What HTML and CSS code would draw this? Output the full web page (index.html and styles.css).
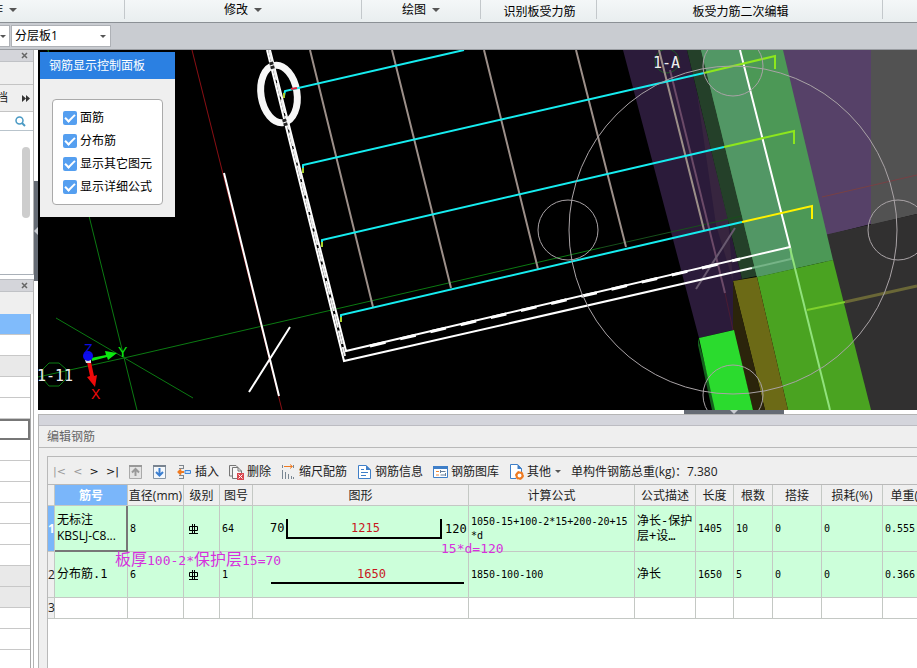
FILE: index.html
```html
<!DOCTYPE html>
<html lang="zh-CN">
<head>
    <meta charset="UTF-8">
    <meta name="viewport" content="width=device-width, initial-scale=1.0">
    <title>编辑钢筋</title>
    <link rel="stylesheet" href="styles.css">
</head>
<body>

    <!-- Ribbon groups -->
    <nav class="ribbon">
        <div class="group group-first"><button>作<i class="caret"></i></button></div>
        <div class="group group-modify"><button>修改<i class="caret"></i></button></div>
        <div class="group group-draw"><button>绘图<i class="caret"></i></button></div>
        <div class="group group-detect"><button>识别板受力筋</button></div>
        <div class="group group-edit"><button>板受力筋二次编辑</button></div>
        <div class="group group-rest"></div>
    </nav>

    <!-- Layer selection -->
    <div class="layer-bar">
        <div class="combo combo-cut"><select aria-label="楼层"><option></option></select><i class="caret"></i></div>
        <div class="combo"><select aria-label="分层"><option>分层板1</option></select><i class="caret"></i></div>
    </div>

    <div class="workspace">
        <aside class="sidebar">
            <section class="side-panel side-top">
                <div class="side-head"><button aria-label="关闭"><svg width="7" height="7" viewBox="0 0 7 7"><path d="M1 1L6 6M6 1L1 6" stroke="#666" stroke-width="1.5"/></svg></button></div>
                <div class="side-blank"></div>
                <div class="side-tools"><button>档</button><button aria-label="更多"><svg width="8" height="7" viewBox="0 0 8 7"><path d="M0 0L4 3.5L0 7ZM4 0L8 3.5L4 7Z" fill="#333"/></svg></button></div>
                <div class="side-search">
                    <input type="text" aria-label="搜索">
                    <svg width="11" height="11" viewBox="0 0 11 11"><circle cx="4.5" cy="4.5" r="3.5" fill="none" stroke="#4a9ac4" stroke-width="1.5"/><path d="M7 7L10 10" stroke="#4a9ac4" stroke-width="2"/></svg>
                </div>
                <div class="side-list"><div class="thumb"></div></div>
            </section>
            <section class="side-panel side-bottom">
                <div class="side-head"><button aria-label="关闭"><svg width="7" height="7" viewBox="0 0 7 7"><path d="M1 1L6 6M6 1L1 6" stroke="#666" stroke-width="1.5"/></svg></button></div>
                <div class="side-blank"></div>
                <ul class="props">
                    <li class="blue"></li>
                    <li></li>
                    <li class="gray"></li>
                    <li></li>
                    <li></li>
                    <li class="current"></li>
                    <li></li>
                    <li></li>
                    <li></li>
                    <li></li>
                    <li></li>
                    <li></li>
                    <li class="gray"></li>
                    <li class="gray"></li>
                    <li></li>
                    <li></li>
                    <li></li>
                </ul>
            </section>
        </aside>

        <div class="splitter"><div class="grip"><svg width="4" height="8" viewBox="0 0 4 8"><path d="M4 0V8L0 4Z" fill="#c9ccd1"/></svg></div></div>

        <main class="main">
            <div class="viewport">
                <!-- Model view -->
                <svg class="model" viewBox="38 50 879 360" preserveAspectRatio="xMinYMin slice">
                    <!-- slabs and beams -->
                    <path d="M775 50H871V224L820 237Z" fill="#564168"/>
                    <path d="M871 50H917V214L871 225Z" fill="#525252"/>
                    <path d="M820 236L917 214V410H860Z" fill="#313030"/>
                    <path d="M623 50H687L742 279L733 281V330L699 338Z" fill="#2b1b3a"/>
                    <path d="M697 93L728 219L733 281L716 225Z" fill="#37253f"/>
                    <path d="M687 50H701L757 276L742 279Z" fill="#244029"/>
                    <path d="M701 50H783L833 260L757 277Z" fill="#4c9856"/>
                    <path d="M701 50H740L790 247L793 269L757 277Z" fill="#529765"/>
                    <path d="M757 277L833 260L871 410H788Z" fill="#4aa321"/>
                    <path d="M733 281L757 277L788 410H765Z" fill="#6c6a16"/>
                    <path d="M733 281L765 410H753L733 330Z" fill="#2b240b"/>
                    <path d="M698 338V345L712 410H717Z" fill="#14611d"/>
                    <path d="M699 338L734 330L753 410H715Z" fill="#2bdb2e"/>

                    <!-- axis lines -->
                    <g fill="none" stroke="#0b7a12">
                        <path d="M48 50L137 410M56 318L193 398M38 377L124 358L600 248"/>
                        <path d="M600 248L742 216" stroke="#17501b"/>
                        <path d="M43 369L49 363L59 363L66 369V379L59 386H49L43 379Z"/>
                        <circle cx="667" cy="61" r="12" stroke="#1b5a24"/>
                    </g>
                    <path d="M192 50L282 410" stroke="#8a0f14"/>
                    <path d="M822 197L917 175" stroke="#784145"/>
                    <path d="M725 293L733 330" stroke="#4b1c33"/>

                    <!-- distribution bars -->
                    <g stroke="#9c8f89" stroke-width="2">
                        <path d="M310 50L373 307M392 50L451 288M484 50L538 269M576 50L626 247M659 50L704 230"/>
                        <path d="M670 70L725 293" stroke="#6b4a68"/>
                        <path d="M735 228L696 289" stroke="#695a70"/>
                    </g>

                    <!-- slab outline -->
                    <g fill="none" stroke="#fff" stroke-width="2">
                        <path d="M267 50L344 361L752 268"/>
                        <path d="M270 50L346 351L790 247L740 50"/>
                        <path d="M269 50L345 356" stroke="#eee" stroke-dasharray="14 3"/>
                        <path d="M370 346L740 259" stroke-width="3" stroke-dasharray="16 15"/>
                        <path d="M224 173L279 396M290 327L249 392"/>
                        <path d="M752 268L791 259V248" stroke="#76b487"/>
                        <path d="M790 248L830 410" stroke="#91e27c"/>
                    </g>
                    <ellipse cx="279" cy="94" rx="18" ry="29" transform="rotate(-9 279 94)" fill="none" stroke="#f7f7f7" stroke-width="7"/>
                    <path d="M271 62L273 69M284 119L286 126" stroke="#222" stroke-width="4" stroke-dasharray="3 1"/>

                    <!-- main bars -->
                    <g fill="none" stroke="#16edf0" stroke-width="2">
                        <path d="M284 96L285 91L464 50"/>
                        <path d="M303 170V165L704 73"/>
                        <path d="M322 245V240L724 147"/>
                        <path d="M341 320V315L742 222"/>
                        <path d="M704 73L775 56V69M724 147L794 131V144" stroke="#8de71d"/>
                        <path d="M742 222L812 206V219" stroke="#fff200"/>
                        <path d="M284 93V98M303 168V173M322 242V247M341 317V322" stroke="#a8cf2b"/>
                        <path d="M291 89L297 88" stroke="#e0203a"/>
                    </g>
                    <path d="M807 310L845 302" stroke="#7fd12c" stroke-width="2"/>
                    <path d="M845 302L917 286" stroke="#6a6737" stroke-width="3"/>

                    <!-- orbit control -->
                    <g fill="none" stroke="#a9a3a6">
                        <circle cx="733" cy="230" r="164"/>
                        <circle cx="733" cy="66" r="30"/>
                        <circle cx="568" cy="230" r="30"/>
                        <circle cx="898" cy="230" r="30"/>
                        <circle cx="733" cy="395" r="30"/>
                    </g>

                    <!-- axis tripod -->
                    <path d="M91 358L106 355L105 351L117 353L108 360L107 357L92 361Z" fill="#0be80f"/>
                    <path d="M87 362L91 362L94 376L97 375L95 387L87 377L90 376Z" fill="#f00a0a"/>
                    <path d="M85 360L91 359V363H86Z" fill="#ddd"/>
                    <circle cx="88" cy="356" r="5" fill="#0c0cf0"/>
                    <g class="axis-name">
                        <text x="84" y="354" fill="#0c0ce0">Z</text>
                        <text x="118" y="357" fill="#0be80f">Y</text>
                        <text x="91" y="399" fill="#f00a0a">X</text>
                    </g>
                    <g class="grid-name">
                        <text x="37" y="381">1-11</text>
                        <text x="653" y="68">1-A</text>
                    </g>
                </svg>

                <!-- Display control panel -->
                <div class="display-panel">
                    <h2>钢筋显示控制面板</h2>
                    <div class="options">
                        <label><input type="checkbox" checked>面筋</label>
                        <label><input type="checkbox" checked>分布筋</label>
                        <label><input type="checkbox" checked>显示其它图元</label>
                        <label><input type="checkbox" checked>显示详细公式</label>
                    </div>
                </div>
            </div>

            <div class="dock-splitter"><div class="dock-grip"><svg width="8" height="4" viewBox="0 0 8 4"><path d="M0 0H8L4 4Z" fill="#c9ccd1"/></svg></div></div>

            <!-- Bar editing table -->
            <section class="dock">
                <div class="dock-bar"></div>
                <h2 class="dock-title">编辑钢筋</h2>
                <div class="editor">
                    <div class="toolbar">
                        <div class="pager">
                            <button class="off">|&lt;</button>
                            <button class="off">&lt;</button>
                            <button>&gt;</button>
                            <button>&gt;|</button>
                        </div>
                        <div class="movers">
                            <button aria-label="上移"><svg width="14" height="16" viewBox="0 0 14 16"><path d="M.5 1.5H12.500V14.500H.5Z" fill="#e4e4e4" stroke="#aaa"/><path d="M0 2H13" stroke="#999" stroke-width="2"/><path d="M6.500 12V5M3 8.500L6.500 5L10 8.500" fill="none" stroke="#999" stroke-width="2"/></svg></button>
                            <button aria-label="下移"><svg width="14" height="16" viewBox="0 0 14 16"><path d="M.5 1.500H12.500V14.500H.5Z" fill="#f4f8fc" stroke="#8796a5"/><path d="M0 2H13" stroke="#78838f" stroke-width="2"/><path d="M6.500 4V11M3 8L6.500 11.500L10 8" fill="none" stroke="#3b7fd0" stroke-width="2"/></svg></button>
                        </div>
                        <button class="tool"><svg width="16" height="16" viewBox="0 0 16 16"><path d="M2 1.500H7M6.500 1V4M2 14.500H7M6.500 12V15M2 4.500H7M2 11.500H7" stroke="#7e868e" fill="none"/><path d="M1 8H7M4 5.500L1.500 8L4 10.500" stroke="#ee7a21" stroke-width="2" fill="none"/><path d="M8 6.500H13.500V9.500H8Z" fill="#c5defa" stroke="#3f87d9"/></svg>插入</button>
                        <button class="tool"><svg width="16" height="16" viewBox="0 0 16 16"><path d="M3 12H.5V1.500H7L9 3.500" fill="none" stroke="#777"/><path d="M3.500 3.500H9L12.500 7V14.500H3.500Z" fill="#f8f8f8" stroke="#777"/><path d="M9 3.500V7H12.500" fill="none" stroke="#777"/><path d="M8 9H15V16H8Z" fill="#d9474e"/><path d="M9.500 10.500L13.500 14.500M13.500 10.500L9.500 14.500" stroke="#fff"/></svg>删除</button>
                        <button class="tool"><svg width="16" height="16" viewBox="0 0 16 16"><path d="M1.500 1V4M1.500 6V15M4.500 8V15M7.500 10V15M10.500 12V15M12.500 13V15" stroke="#7a8793"/><path d="M3 2.500H11M9 .5L11.500 2.500L9 4.500" fill="none" stroke="#ee7a21"/><path d="M12.500 1V4" stroke="#7a8793"/></svg>缩尺配筋</button>
                        <button class="tool"><svg width="16" height="16" viewBox="0 0 16 16"><path d="M1.500 1.500H9L13.500 6V14.500H1.500Z" fill="#fff" stroke="#3f7fc8"/><path d="M9 1V6H14Z" fill="#3f7fc8"/><path d="M4 5.500H7M4 8.500H11M4 11.500H9" stroke="#3f7fc8"/></svg>钢筋信息</button>
                        <button class="tool"><svg width="16" height="16" viewBox="0 0 16 16"><path d="M.5 2.500H14.500V13.500H.5Z" fill="#fff" stroke="#3f7fc8"/><path d="M0 3.500H15" stroke="#3f7fc8" stroke-width="3"/><path d="M3 7.500H6M3 11H6" stroke="#ee8a3a"/><path d="M7.500 7.500H12.500M7.500 11H12.500M7.500 6V9M12.500 9V12" stroke="#68809a"/></svg>钢筋图库</button>
                        <button class="tool"><svg width="16" height="16" viewBox="0 0 16 16"><path d="M7 14.500H1.500V.5H8.500L12.500 4.500V8" fill="#fff" stroke="#3f7fc8"/><path d="M8.500 0V5H13Z" fill="#3f7fc8"/><circle cx="10.500" cy="11.500" r="3" fill="#fff" stroke="#ee7a21" stroke-width="2"/><circle cx="10.500" cy="11.500" r="4" fill="none" stroke="#ee7a21" stroke-dasharray="2 2"/></svg>其他<i class="caret"></i></button>
                        <span class="total">单构件钢筋总重(kg)：7.380</span>
                    </div>

                    <div class="table-wrap">
                        <table class="bars">
                            <colgroup>
                                <col class="c-no"><col class="c-name"><col class="c-dia"><col class="c-grade"><col class="c-fig"><col class="c-shape"><col class="c-formula"><col class="c-desc"><col class="c-len"><col class="c-count"><col class="c-lap"><col class="c-loss"><col class="c-weight">
                            </colgroup>
                            <thead>
                                <tr>
                                    <th></th>
                                    <th class="active">筋号</th>
                                    <th>直径(mm)</th>
                                    <th>级别</th>
                                    <th>图号</th>
                                    <th>图形</th>
                                    <th>计算公式</th>
                                    <th>公式描述</th>
                                    <th>长度</th>
                                    <th>根数</th>
                                    <th>搭接</th>
                                    <th>损耗(%)</th>
                                    <th>单重(kg)</th>
                                </tr>
                            </thead>
                            <tbody>
                                <tr class="filled">
                                    <th class="active">1</th>
                                    <td class="focus">无标注<br>KBSLJ-C8...</td>
                                    <td>8</td>
                                    <td><svg class="grade" width="10" height="10" viewBox="0 0 10 10"><path d="M.5 2.500H8.500V6.500H.5ZM3.500 0V9M5.500 0V9M0 9.500H9" fill="none" stroke="#000"/></svg></td>
                                    <td>64</td>
                                    <td class="shape">
                                        <svg width="215" height="44" viewBox="253 507 215 44">
                                            <path d="M287 519V538H441V519" fill="none" stroke="#000" stroke-width="2"/>
                                            <text x="270" y="532">70</text>
                                            <text x="351" y="532" class="len">1215</text>
                                            <text x="445" y="533">120</text>
                                        </svg>
                                    </td>
                                    <td>1050-15+100-2*15+200-20+15<br>*d</td>
                                    <td><span class="cn">净长-保护<br>层+设…</span></td>
                                    <td>1405</td>
                                    <td>10</td>
                                    <td>0</td>
                                    <td>0</td>
                                    <td>0.555</td>
                                </tr>
                                <tr class="filled">
                                    <th>2</th>
                                    <td><span class="cn">分布筋.1</span></td>
                                    <td>6</td>
                                    <td><svg class="grade" width="10" height="10" viewBox="0 0 10 10"><path d="M.5 2.500H8.500V6.500H.5ZM3.500 0V9M5.500 0V9M0 9.500H9" fill="none" stroke="#000"/></svg></td>
                                    <td>1</td>
                                    <td class="shape">
                                        <svg width="215" height="44" viewBox="253 553 215 44">
                                            <path d="M271 583H464" stroke="#000" stroke-width="2"/>
                                            <text x="357" y="578" class="len">1650</text>
                                        </svg>
                                    </td>
                                    <td>1850-100-100</td>
                                    <td><span class="cn">净长</span></td>
                                    <td>1650</td>
                                    <td>5</td>
                                    <td>0</td>
                                    <td>0</td>
                                    <td>0.366</td>
                                </tr>
                                <tr class="empty">
                                    <th>3</th>
                                    <td></td><td></td><td></td><td></td><td></td><td></td><td></td><td></td><td></td><td></td><td></td><td></td>
                                </tr>
                            </tbody>
                        </table>
                        <span class="note note-cover"><b>板厚</b>100-2*<b>保护层</b>15=70</span>
                        <span class="note note-hook">15*d=120</span>
                    </div>
                </div>
            </section>
        </main>
    </div>

</body>
</html>
```
FILE: styles.css
```css
* {
    box-sizing: border-box;
}
body {
    margin: 0;
    height: 100vh;
    display: flex;
    flex-direction: column;
    overflow: hidden;
    background-color: #fff;
    color: #222;
    font-family: "Open Sans", "Noto Sans CJK SC", sans-serif;
    font-size: 12px;
    line-height: 16px;
}
button {
    display: flex;
    align-items: center;
    padding: 0;
    border: none;
    background: none;
    color: inherit;
    font: inherit;
    white-space: nowrap;
}
h2 {
    margin: 0;
    font-size: 12px;
    font-weight: normal;
}
svg {
    display: block;
}
.caret {
    border: 4px solid transparent;
    border-top-color: #555;
    border-bottom: none;
}

/* ribbon */
.ribbon {
    display: flex;
    height: 23px;
    flex: none;
    background-image: linear-gradient(#f4f7f8, #e9eeef);
    border-bottom: 1px solid #8b9095;
    color: #000;
}
.group {
    display: flex;
    flex: none;
    justify-content: center;
    margin-bottom: 3px;
    border-right: 1px solid #c3c8cb;
}
.group button {
    gap: 6px;
}
.group-first {
    justify-content: flex-start;
    margin-left: -9px;
    width: 134px;
}
.group-modify {
    width: 237px;
}
.group-draw {
    width: 119px;
}
.group-detect {
    width: 116px;
}
.group-edit {
    width: 286px;
}
.group-detect button, .group-edit button {
    padding: 4px 0 0 2px;
}
.group-rest {
    flex: 1;
    border-right: none;
}

/* layer bar */
.layer-bar {
    display: flex;
    gap: 1px;
    height: 27px;
    flex: none;
    padding: 2px 0;
    background-color: #c9ccd1;
    border-bottom: 1px solid #9a9da2;
}
.combo {
    display: flex;
    align-items: center;
    width: 100px;
    padding-right: 4px;
    background-color: #fff;
    border: 1px solid #aeb1b6;
}
.combo-cut {
    width: 10px;
    border-left: none;
    padding-right: 3px;
}
.combo .caret {
    border-width: 3px;
    border-bottom: none;
}
.combo select {
    flex: 1;
    min-width: 0;
    padding: 0 0 0 3px;
    border: none;
    appearance: none;
    background: none;
    color: #000;
    font: inherit;
}
.combo-cut select {
    padding: 0;
}

.workspace {
    display: flex;
    flex: 1;
    min-height: 0;
}

/* sidebar */
.sidebar {
    display: flex;
    flex-direction: column;
    gap: 4px;
    width: 34px;
    flex: none;
}
.side-panel {
    border-right: 1px solid #b4b4b4;
    overflow: hidden;
}
.side-top {
    display: flex;
    flex-direction: column;
    height: 225px;
    flex: none;
    border-bottom: 1px solid #a9b0b8;
}
.side-bottom {
    flex: 1;
    border-top: 1px solid #b8bbc0;
}
.side-head {
    display: flex;
    justify-content: flex-end;
    height: 12px;
    flex: none;
    padding-right: 5px;
    background-color: #d4d5da;
    border-bottom: 1px solid #c0c2c6;
}
.side-blank {
    height: 22px;
    flex: none;
    background-color: #efefef;
}
.side-tools {
    display: flex;
    align-items: center;
    justify-content: space-between;
    height: 28px;
    flex: none;
    padding-right: 3px;
    background-color: #efefef;
    border-top: 1px solid #c4c4c4;
    border-bottom: 1px solid #c4c4c4;
}
.side-tools button:first-child {
    margin-left: -4px;
}
.side-search {
    display: flex;
    align-items: center;
    height: 19px;
    flex: none;
    padding-right: 7px;
    border-bottom: 1px solid #b9c4cc;
}
.side-search input {
    flex: 1;
    min-width: 0;
    padding: 0;
    border: none;
}
.side-list {
    display: flex;
    flex: 1;
    justify-content: flex-end;
    padding: 16px 3px 56px;
}
.thumb {
    width: 8px;
    border-radius: 4px;
    background-color: #cdcdcd;
}
.props {
    width: 31px;
    margin: 0;
    padding: 0;
    list-style: none;
    border-right: 1px solid #a9a9a9;
}
.props li {
    height: 21px;
    border-bottom: 1px solid #c8c8c8;
}
.props .blue {
    background-color: #80bbfb;
}
.props .gray {
    background-color: #e9e9e9;
}
.props .current {
    border: 2px solid #777;
    border-left: none;
}
.splitter {
    width: 4px;
    flex: none;
    padding-top: 131px;
}
.grip {
    display: flex;
    align-items: center;
    height: 100px;
    background-color: #656b74;
}

/* model viewport */
.main {
    display: flex;
    flex-direction: column;
    flex: 1;
    min-width: 0;
}
.viewport {
    position: relative;
    height: 360px;
    flex: none;
    background-color: #000;
    overflow: hidden;
}
.model {
    width: 100%;
    height: 100%;
}
.axis-name {
    font: 14px "Liberation Sans", sans-serif;
}
.grid-name {
    font: 15px "DejaVu Sans Mono", monospace;
    fill: #eee;
}
.display-panel {
    position: absolute;
    top: 2px;
    left: 2px;
    width: 135px;
    background-color: #efefef;
    color: #000;
}
.display-panel h2 {
    padding: 6px 9px 5px;
    background-color: #2b80e2;
    color: #fff;
}
.options {
    display: flex;
    flex-direction: column;
    gap: 7px;
    margin: 20px 12px 12px;
    padding: 10px 0 9px;
    background-color: #fff;
    border: 1px solid #aaa;
    border-radius: 4px;
}
.options label {
    display: flex;
    align-items: center;
    gap: 3px;
    padding-left: 10px;
}
.options input {
    width: 14px;
    height: 14px;
    margin: 0;
    appearance: none;
    display: grid;
    place-items: center;
    border-radius: 2px;
    background-color: #559ff0;
}
.options input:checked::before {
    content: "";
    width: 4px;
    height: 8px;
    margin-bottom: 2px;
    border: solid #fff;
    border-width: 0 2px 2px 0;
    transform: rotate(45deg);
}

/* dock */
.dock-splitter {
    display: flex;
    justify-content: center;
    height: 4px;
    flex: none;
}
.dock-grip {
    display: flex;
    justify-content: center;
    width: 100px;
    margin-left: 513px;
    background-color: #656b74;
}
.dock {
    display: flex;
    flex-direction: column;
    flex: 1;
    min-height: 0;
    background-color: #efefef;
    border-top: 1px solid #b4b4b4;
    border-left: 1px solid #b4b4b4;
}
.dock-bar {
    height: 11px;
    flex: none;
    background-color: #d4d5dc;
    border-bottom: 1px solid #bcbcc2;
}
.dock-title {
    flex: none;
    padding: 3px 8px 2px;
    border-bottom: 1px solid #b9b9b9;
    color: #666;
}
.editor {
    display: flex;
    flex-direction: column;
    flex: 1;
    min-height: 0;
    margin: 8px 0 0 8px;
    border-top: 1px solid #b9b9b9;
    border-left: 1px solid #b9b9b9;
}
.toolbar {
    display: flex;
    align-items: center;
    gap: 10px;
    height: 28px;
    flex: none;
    padding: 2px 0 0 5px;
    border-bottom: 1px solid #b9b9b9;
    white-space: nowrap;
}
.pager {
    display: flex;
    justify-content: space-between;
    width: 66px;
    color: #111;
    font-family: "DejaVu Sans", sans-serif;
    font-size: 11px;
}
.pager .off {
    color: #999;
}
.movers {
    display: flex;
    gap: 10px;
}
.tool {
    gap: 2px;
}
.tool .caret {
    margin-left: 2px;
    border-width: 3px;
    border-bottom: none;
}

/* bars table */
.table-wrap {
    position: relative;
    flex: 1;
    overflow: hidden;
    background-color: #fff;
}
.bars {
    width: 895px;
    table-layout: fixed;
    border-collapse: separate;
    border-spacing: 0;
}
.c-no { width: 7px; }
.c-name { width: 73px; }
.c-dia { width: 56px; }
.c-grade { width: 36px; }
.c-fig { width: 33px; }
.c-shape { width: 216px; }
.c-formula { width: 166px; }
.c-desc { width: 61px; }
.c-len { width: 38px; }
.c-count { width: 39px; }
.c-lap { width: 49px; }
.c-loss { width: 61px; }
.bars th, .bars td {
    padding: 0;
    border-right: 1px solid #c4c8c4;
    border-bottom: 1px solid #c4c8c4;
    white-space: nowrap;
}
.bars th {
    background-color: #efefef;
    font-weight: normal;
}
.bars thead th {
    height: 21px;
    padding-top: 2px;
}
.bars .active {
    background-color: #7ab6fa;
    color: #fff;
    font-weight: bold;
}
.bars td {
    padding-left: 2px;
    color: #000;
    font-family: "DejaVu Sans Mono", "Noto Sans CJK SC", monospace;
    font-size: 10px;
    line-height: 14px;
}
.bars .filled td {
    height: 46px;
    background-color: #ccffda;
}
.bars .empty td {
    height: 21px;
}
.bars .focus {
    border-right: 2px solid #777;
    border-bottom: 2px solid #777;
    font-family: "Open Sans", "Noto Sans CJK SC", sans-serif;
    font-size: 12px;
    line-height: 16px;
}
.bars .cn {
    font-size: 12px;
}
.bars .shape {
    padding: 0;
}
.shape text {
    font: 12px "DejaVu Sans Mono", monospace;
}
.shape .len {
    fill: #c8171e;
}
.grade {
    margin-left: 3px;
}
.note {
    position: absolute;
    color: #d631dd;
    font-family: "DejaVu Sans Mono", "Noto Sans CJK SC", monospace;
    font-size: 13px;
    line-height: 18px;
    white-space: nowrap;
}
.note b {
    font-size: 16px;
    font-weight: normal;
}
.note-cover {
    top: 66px;
    left: 67px;
}
.note-hook {
    top: 55px;
    left: 393px;
}
```
